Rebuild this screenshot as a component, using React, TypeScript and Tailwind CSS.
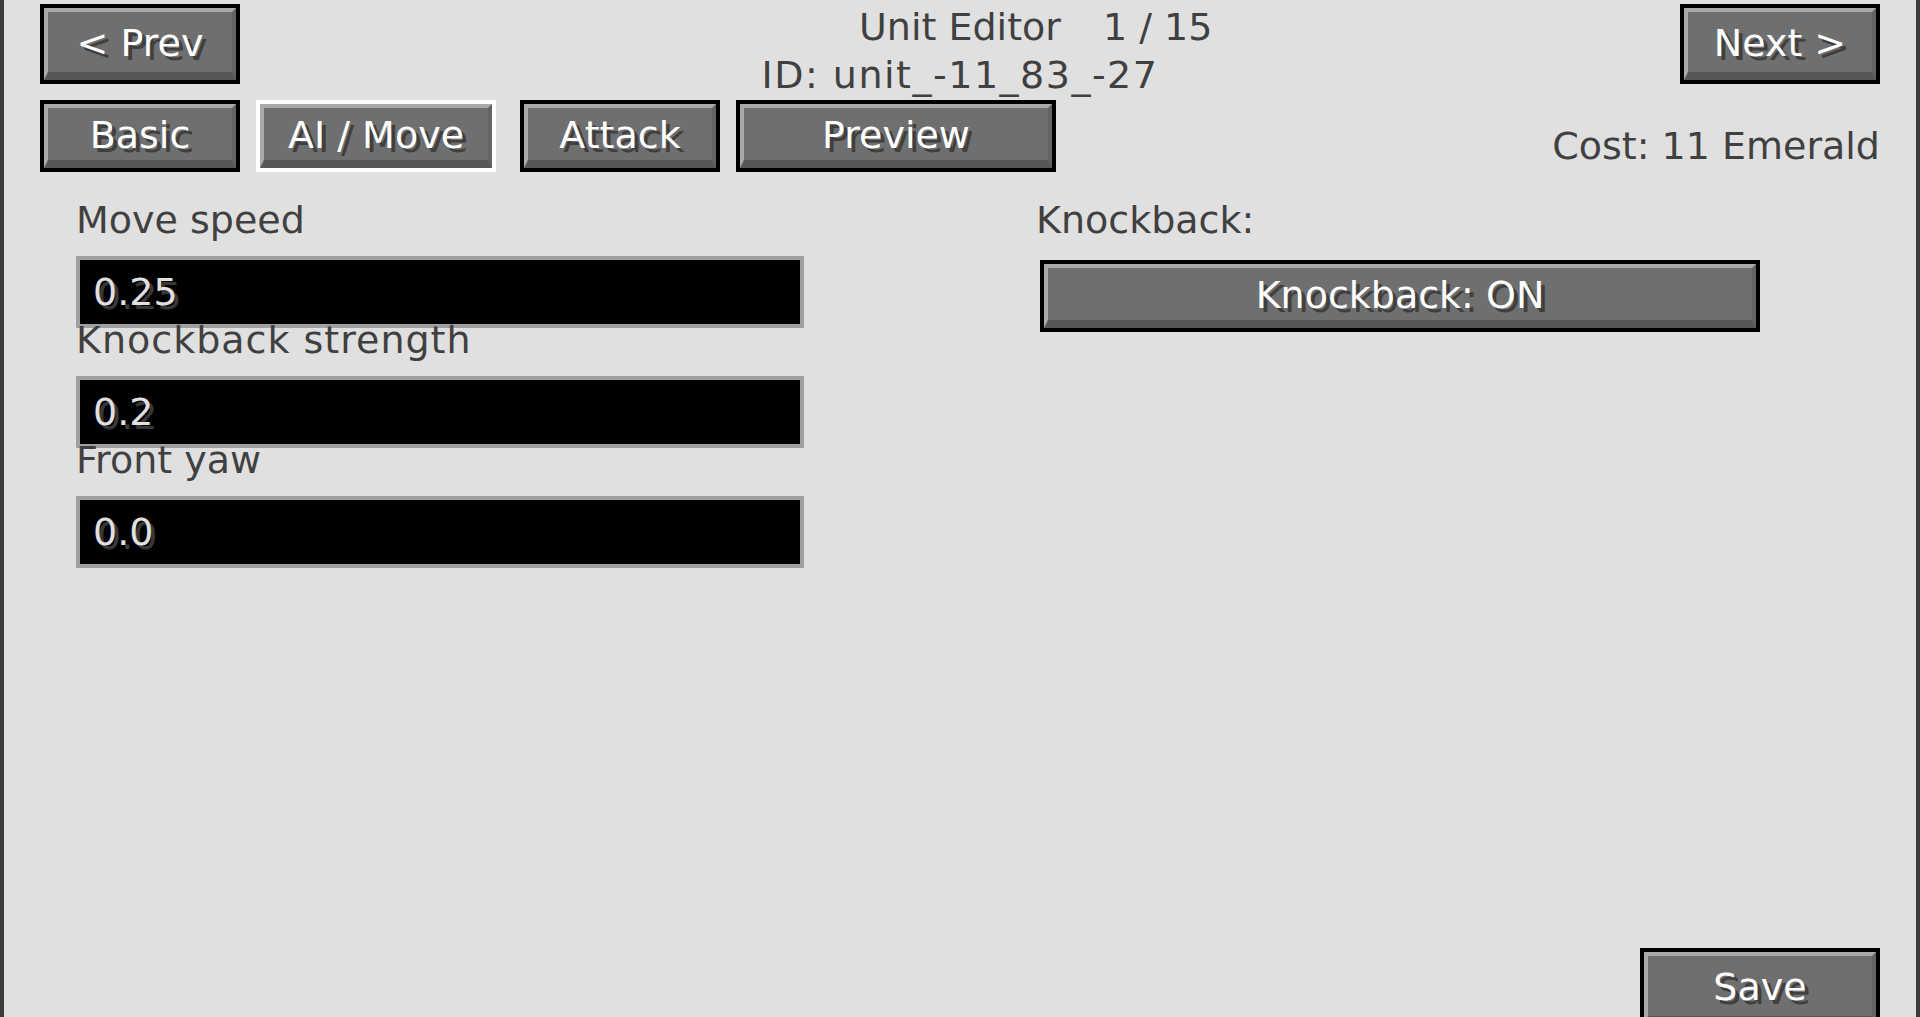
import type { ReactNode } from "react";

function McButton({
  children,
  size,
  selected = false,
}: {
  children: ReactNode;
  size: string;
  selected?: boolean;
}) {
  return (
    <div
      className={`flex shrink-0 border-4 ${selected ? "border-white" : "border-black"} ${size}`}
    >
      <div className="flex flex-1 items-center justify-center border-t-4 border-l-4 border-r-4 border-b-8 border-t-[#a9a9a9] border-l-[#a9a9a9] border-r-[#646464] border-b-[#575757] bg-[#6f6f6f] pt-[2px] text-white [text-shadow:4px_4px_0_#3f3f3f]">
        {children}
      </div>
    </div>
  );
}

function Field({ label, value, wide = false }: { label: string; value: string; wide?: boolean }) {
  return (
    <div className="h-[120px]">
      <div className={wide ? "tracking-[1px]" : ""}>{label}</div>
      <div className="mt-[17.5px] flex h-[72px] items-center border-4 border-[#a0a0a0] bg-black pl-[13px] text-[#e0e0e0] [text-shadow:4px_4px_0_#383838]">
        {value}
      </div>
    </div>
  );
}

export default function App() {
  return (
    <div className="flex h-[1017px] w-[1920px] flex-col overflow-hidden border-x-4 border-[#3c3c3c] bg-[#e0e0e0] font-['DejaVu_Sans',sans-serif] text-[38px] leading-[38px] text-[#404040]">
      <div className="grid grid-cols-[200px_1fr_200px] px-[36px] pt-[4px]">
        <McButton size="w-[200px] h-[80px]">&lt; Prev</McButton>
        <div className="flex h-[80px] flex-col items-center pt-[4px]">
          <div className="grid w-full grid-cols-[1fr_auto_1fr]">
            <span />
            <span>Unit Editor</span>
            <span className="pl-[42px]">1 / 15</span>
          </div>
          <div className="mt-[10px] whitespace-nowrap tracking-[1.5px]">ID: unit_-11_83_-27</div>
        </div>
        <McButton size="w-[200px] h-[80px]">Next &gt;</McButton>
      </div>

      <div className="mt-[16px] flex items-start px-[36px]">
        <McButton size="w-[200px] h-[72px]">Basic</McButton>
        <div className="ml-[16px]">
          <McButton size="w-[240px] h-[72px]" selected>
            AI / Move
          </McButton>
        </div>
        <div className="ml-[24px]">
          <McButton size="w-[200px] h-[72px]">Attack</McButton>
        </div>
        <div className="ml-[16px]">
          <McButton size="w-[320px] h-[72px]">Preview</McButton>
        </div>
        <span className="ml-auto mt-[27px]">Cost: 11 Emerald</span>
      </div>

      <div className="mt-[28.5px] flex gap-[232px] pl-[72px]">
        <div className="w-[728px]">
          <Field label="Move speed" value="0.25" />
          <Field label="Knockback strength" value="0.2" wide />
          <Field label="Front yaw" value="0.0" />
        </div>
        <div>
          <div>Knockback:</div>
          <div className="ml-[4px] mt-[21.5px]">
            <McButton size="w-[720px] h-[72px]">Knockback: ON</McButton>
          </div>
        </div>
      </div>

      <div className="mb-[-11px] mt-auto flex justify-end px-[36px]">
        <McButton size="w-[240px] h-[80px]">Save</McButton>
      </div>
    </div>
  );
}
